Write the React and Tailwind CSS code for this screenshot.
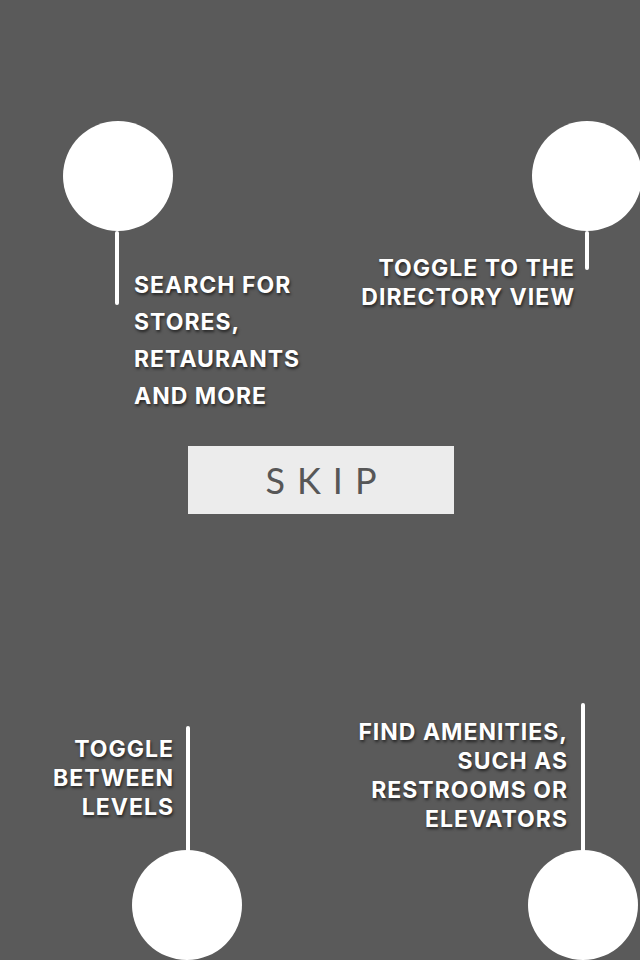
import React from "react";

const label =
  "font-bold uppercase text-white text-[23px] tracking-[1px] [text-shadow:1px_2px_3px_rgba(0,0,0,0.6)]";

function Dot({ className = "" }) {
  return <div className={`w-[110px] h-[110px] shrink-0 rounded-full bg-white ${className}`} />;
}

function Stem({ className = "" }) {
  return <div className={`w-[4px] shrink-0 rounded-full bg-white ${className}`} />;
}

export default function App() {
  return (
    <div
      className="w-[640px] h-[960px] overflow-hidden bg-[#5a5a5a] flex flex-col"
      style={{ fontFamily: "Inter, 'Open Sans', sans-serif" }}
    >
      {/* --- Top callouts --- */}
      <div className="flex justify-between items-start pt-[121px]">
        {/* search */}
        <div className="flex flex-col ml-[63px]">
          <Dot />
          <div className="flex items-start">
            <Stem className="ml-[52px] h-[74px]" />
            <p className={`${label} ml-[15px] mt-[36px] leading-[37px]`}>
              Search for
              <br />
              stores,
              <br />
              retaurants
              <br />
              and more
            </p>
          </div>
        </div>

        {/* directory */}
        <div className="flex flex-col items-end mr-[51px]">
          <Dot className="-mr-[53px]" />
          <div className="flex items-start gap-[10px]">
            <p className={`${label} mt-[23px] leading-[29px] text-right`}>
              Toggle to the
              <br />
              directory view
            </p>
            <Stem className="h-[39px]" />
          </div>
        </div>
      </div>

      {/* --- Skip --- */}
      <div className="flex justify-center pl-[2px] mt-[31px]">
        <button
          className="w-[266px] h-[68px] bg-[#ececec] text-[#575757] text-[36px] font-normal tracking-[12px] pl-[12px] flex items-center justify-center"
          style={{ fontFamily: "Lato, 'Open Sans', sans-serif" }}
        >
          SKIP
        </button>
      </div>

      <div className="flex-1" />

      {/* --- Bottom callouts --- */}
      <div className="flex justify-between items-end">
        {/* levels */}
        <div className="w-[242px] flex flex-col items-end">
          <div className="flex items-start gap-[12px] mr-[52px]">
            <p className={`${label} mt-[9px] leading-[29px] text-right`}>
              Toggle
              <br />
              between
              <br />
              levels
            </p>
            <Stem className="h-[130px]" />
          </div>
          <Dot className="-mt-[6px]" />
        </div>

        {/* amenities */}
        <div className="flex flex-col items-end mr-[2px]">
          <div className="flex items-start gap-[13px] mr-[53px]">
            <p className={`${label} mt-[15px] leading-[29px] text-right`}>
              Find amenities,
              <br />
              such as
              <br />
              restrooms or
              <br />
              elevators
            </p>
            <Stem className="h-[153px]" />
          </div>
          <Dot className="-mt-[6px]" />
        </div>
      </div>
    </div>
  );
}
